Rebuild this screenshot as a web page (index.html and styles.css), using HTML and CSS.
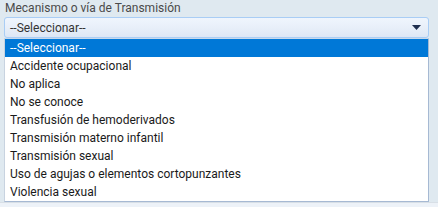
FILE: index.html
```html
<!DOCTYPE html>
<html lang="es">
<head>
<meta charset="utf-8">
<link rel="stylesheet" href="styles.css">
</head>
<body>
<div class="page">
  <div class="field">
    <label class="label">Mecanismo o vía de Transmisión</label>
    <div class="select">
      <span class="value">--Seleccionar--</span>
      <svg class="arrow" width="9" height="5" viewBox="0 0 9 5"><path d="M0 0H9L4.5 5Z" fill="#1f2f4f"/></svg>
    </div>
    <ul class="list">
      <li class="opt selected">--Seleccionar--</li>
      <li class="opt">Accidente ocupacional</li>
      <li class="opt">No aplica</li>
      <li class="opt">No se conoce</li>
      <li class="opt">Transfusión de hemoderivados</li>
      <li class="opt">Transmisión materno infantil</li>
      <li class="opt">Transmisión sexual</li>
      <li class="opt">Uso de agujas o elementos cortopunzantes</li>
      <li class="opt">Violencia sexual</li>
    </ul>
  </div>
  <div class="footer"></div>
</div>
</body>
</html>
```

FILE: styles.css
```css
html, body {
  margin: 0;
  padding: 0;
}
body {
  background: #dfe9f0;
  font-family: Roboto, "Liberation Sans", Arial, sans-serif;
  font-size: 12px;
  color: #222;
  width: 438px;
  height: 207px;
  overflow: hidden;
}
.page {
  display: flex;
  flex-direction: column;
  height: 207px;
  padding-top: 1px;
  box-sizing: border-box;
}
.field {
  padding: 0 9px 0 4px;
  display: flex;
  flex-direction: column;
}
.label {
  color: #4a4a4a;
  height: 15px;
  line-height: 15px;
  padding-left: 1px;
  margin-bottom: 1px;
}
.select {
  height: 19px;
  border: 1px solid #a9cdf5;
  border-radius: 3px;
  background: linear-gradient(#eff5fd 0%, #e8eff9 50%, #dde7f5 100%);
  display: flex;
  align-items: center;
  justify-content: space-between;
  padding: 0 7px 0 5px;
  color: #333;
}
.arrow {
  display: block;
}
.list {
  list-style: none;
  margin: 0;
  padding: 0;
  background: #fff;
  border: 1px solid #a6b9d3;
  border-top: 1px solid #c8d8ea;
  border-left-color: #c8d3e0;
}
.opt {
  height: 18px;
  line-height: 18px;
  padding-left: 5px;
  color: #1a1a1a;
  white-space: nowrap;
}
.opt.selected {
  background: #0078d7;
  color: #fff;
}
.footer {
  flex: 1;
  background: #edf2f8;
  border-top: 1px solid #d8dfe6;
}
```
